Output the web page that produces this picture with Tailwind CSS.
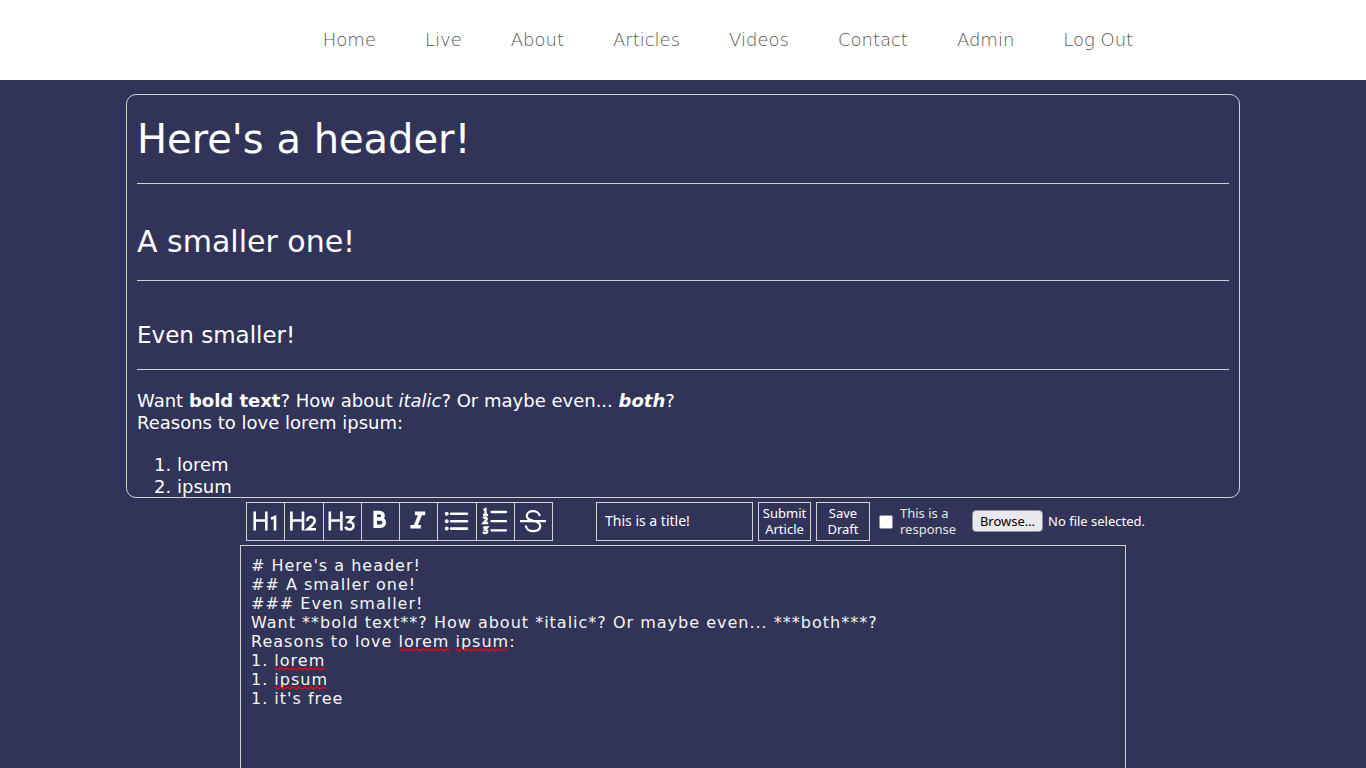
<!DOCTYPE html>
<html lang="en">
<head>
<meta charset="utf-8">
<meta name="viewport" content="width=device-width, initial-scale=1">
<title>Article editor</title>
<script src="https://cdn.jsdelivr.net/npm/@tailwindcss/browser@4"></script>
</head>
<body class="flex h-screen flex-col overflow-hidden bg-[#313458] font-['DejaVu_Sans',sans-serif] text-white">
<header class="flex h-20 shrink-0 items-center justify-center bg-white pl-[90px]">
  <nav class="flex gap-[49px] font-['DejaVu_Sans_Light','DejaVu_Sans',sans-serif] text-lg font-extralight text-[#555]">
    <a href="#">Home</a>
    <a href="#">Live</a>
    <a href="#">About</a>
    <a href="#">Articles</a>
    <a href="#">Videos</a>
    <a href="#">Contact</a>
    <a href="#">Admin</a>
    <a href="#">Log Out</a>
  </nav>
</header>
<main class="flex min-h-0 flex-1 flex-col overflow-hidden pt-[14px]">
  <article class="mx-[126px] h-[404px] shrink-0 overflow-hidden rounded-[10px] border border-[#d3d3d3] px-[10px] text-lg leading-[22px]">
    <h1 class="border-b border-[#d3d3d3] py-5 text-[40px] leading-[48px]">Here's a header!</h1>
    <h2 class="mt-10 border-b border-[#d3d3d3] pb-5 text-[30px] leading-[36px]">A smaller one!</h2>
    <h3 class="mt-10 border-b border-[#d3d3d3] pb-5 text-[23px] leading-[28px]">Even smaller!</h3>
    <p class="mt-5">Want <strong>bold text</strong>? How about <em>italic</em>? Or maybe even... <strong><em>both</em></strong>?<br>Reasons to love lorem ipsum:</p>
    <ol class="mt-5 list-decimal pl-10">
      <li>lorem</li>
      <li>ipsum</li>
    </ol>
  </article>
  <form class="mx-auto mt-1 w-[886px] shrink-0 text-[13px] leading-4">
    <div class="flex w-max items-center pl-[6px] font-['Noto_Sans',sans-serif]">
      <div class="grid h-[39px] w-[307px] grid-cols-8 border-r border-[#d3d3d3]">
        <button type="button" aria-label="Heading 1" class="flex items-center justify-center border-y border-l border-[#d3d3d3] pb-0.5">
          <svg width="28" height="28" viewBox="0 0 28 28" fill="none" stroke="#fff" stroke-width="2.600"><path d="M2.700 4.500v19M14.300 4.500v19M2.700 13.500h11.600M19 11.800l4-1.800v13.500"/></svg>
        </button>
        <button type="button" aria-label="Heading 2" class="flex items-center justify-center border-y border-l border-[#d3d3d3] pb-0.5">
          <svg width="28" height="28" viewBox="0 0 28 28" fill="none" stroke="#fff" stroke-width="2.600"><path d="M1.400 4.500v19M13 4.500v19M1.400 13.500h11.600M17.200 14c0-5.500 8-5 7.500 0c0 2.500-3 4.500-7.200 8.300h8.500"/></svg>
        </button>
        <button type="button" aria-label="Heading 3" class="flex items-center justify-center border-y border-l border-[#d3d3d3] pb-0.5">
          <svg width="28" height="28" viewBox="0 0 28 28" fill="none" stroke="#fff" stroke-width="2.600"><path d="M1.800 4.500v19M13.400 4.500v19M1.800 13.500h11.600M17.600 10.200h7.500l-4 4.800c6 0 5.500 7.500.4 7.500c-2 0-3.600-1-4.200-2.700"/></svg>
        </button>
        <button type="button" aria-label="Bold" class="flex items-center justify-center border-y border-l border-[#d3d3d3] pb-0.5">
          <svg width="28" height="28" viewBox="0 0 28 28" fill="none" stroke="#fff" stroke-width="3.600"><path d="M9.200 5.600h4.500c4.400 0 4.400 6.300 0 6.300H9.200h5.300c5 0 5 7.400 0 7.400H9.200z"/></svg>
        </button>
        <button type="button" aria-label="Italic" class="flex items-center justify-center border-y border-l border-[#d3d3d3] pb-0.5">
          <svg width="28" height="28" viewBox="0 0 28 28" fill="#fff"><path d="M9.900 4.500h10.300v3.700h-3.300l-4 9.800h3v3.500H5.400v-3.500h3.500l4-9.800h-3z"/></svg>
        </button>
        <button type="button" aria-label="Bulleted list" class="flex items-center justify-center border-y border-l border-[#d3d3d3] pb-0.5">
          <svg width="28" height="28" viewBox="0 0 28 28" fill="none" stroke="#fff" stroke-width="2.600" stroke-linecap="round"><path d="M8 6.800h16M8 14.200h16M8 21.600h16"/><path stroke-width="4" d="M3.700 6.800h.01M3.700 14.200h.01M3.700 21.600h.01"/></svg>
        </button>
        <button type="button" aria-label="Numbered list" class="flex items-center justify-center border-y border-l border-[#d3d3d3] pb-0.5">
          <svg width="28" height="28" viewBox="0 0 28 28" fill="none" stroke="#fff" stroke-width="2.300"><path stroke-linecap="round" d="M10.500 5h14.500M10.500 14.200h14.500M10.500 23.300h14.500"/><path d="M2.500 3l2-1v6M2 8h5M2.300 11.500c1-1.500 4-1 3.300.8c-.3 1-1.600 2-3 3.700h4.600M2.200 20.500h4l-2 2.200c3 0 2.400 3.300 0 3.300c-1 0-1.800-.3-2.300-1"/></svg>
        </button>
        <button type="button" aria-label="Strikethrough" class="flex items-center justify-center border-y border-l border-[#d3d3d3] pb-0.5">
          <svg width="28" height="28" viewBox="0 0 28 28" fill="none" stroke="#fff" stroke-width="2.300"><path d="M1 14.200h26M20.800 9C19.800 2.500 7.800 2.500 7.800 9c0 3 3.500 4.200 7 5c4 1 6.500 2 6.500 5c0 7-14 7-14.500-.5"/></svg>
        </button>
      </div>
      <input type="text" aria-label="Article title" value="This is a title!" class="ml-[43px] h-[39px] w-[157px] border border-[#d3d3d3] bg-transparent px-2 pb-0.5 text-sm">
      <button type="submit" class="ml-[5px] h-[39px] w-[53px] border border-[#d3d3d3] pb-0.5">Submit Article</button>
      <button type="button" class="ml-[5px] h-[39px] w-[54px] border border-[#d3d3d3] px-2 pb-0.5">Save Draft</button>
      <input id="response" type="checkbox" class="ml-[9px] size-[14px] appearance-none rounded-[2px] border border-[#8f8f9d] bg-white checked:bg-blue-600">
      <label for="response" class="ml-[7px] w-[72px] pb-0.5 text-[#e5e5e5]"><span class="block">This is a</span><span class="block">response</span></label>
      <label for="upload" class="flex items-center gap-[5px] pb-0.5">
        <span class="flex h-[22px] w-[71px] items-center justify-center rounded-[4px] border border-[#8f8f9d] bg-[#e9e9ed] text-black">Browse…</span>
        <span>No file selected.</span>
      </label>
      <input id="upload" type="file" class="sr-only">
    </div>
    <div class="relative mt-1">
      <textarea aria-label="Article body" spellcheck="false" class="block h-80 w-full resize-none border border-[#d3d3d3] bg-transparent p-[10px] text-base leading-[19px] tracking-[1px] text-[#f5f5f5]"># Here's a header!
## A smaller one!
### Even smaller!
Want **bold text**? How about *italic*? Or maybe even... ***both***?
Reasons to love lorem ipsum:
1. lorem
1. ipsum
1. it's free</textarea>
      <!-- spelling marks under unknown words -->
      <svg class="pointer-events-none absolute left-0 top-0" width="300" height="150" aria-hidden="true">
        <g fill="none" stroke="#f00" stroke-width="1.400">
          <path d="M159 104l3 2 3-2 3 2 3-2 3 2 3-2 3 2 3-2 3 2 3-2 3 2 3-2 3 2 3-2 3 2 3-2 3 2"/>
          <path d="M216 104l3 2 3-2 3 2 3-2 3 2 3-2 3 2 3-2 3 2 3-2 3 2 3-2 3 2 3-2 3 2 3-2 3 2"/>
          <path d="M35 123l3 2 3-2 3 2 3-2 3 2 3-2 3 2 3-2 3 2 3-2 3 2 3-2 3 2 3-2 3 2 3-2 3 2"/>
          <path d="M35 142l3 2 3-2 3 2 3-2 3 2 3-2 3 2 3-2 3 2 3-2 3 2 3-2 3 2 3-2 3 2 3-2 3 2"/>
        </g>
      </svg>
    </div>
  </form>
</main>
</body>
</html>
